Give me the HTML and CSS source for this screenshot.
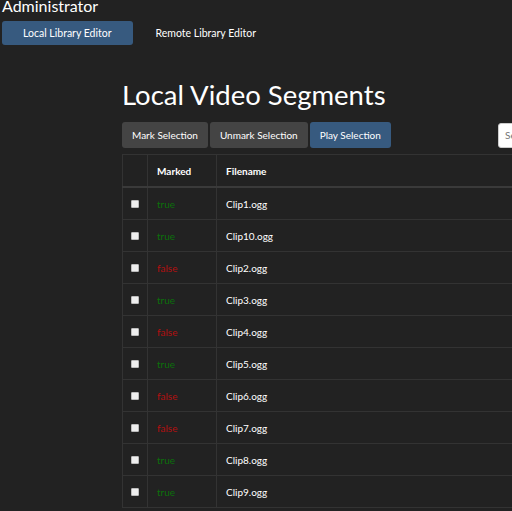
FILE: index.html
```html
<!DOCTYPE html>
<html lang="en">
<head>
  <meta charset="UTF-8">
  <title>Administrator</title>
  <link rel="stylesheet" href="styles.css">
</head>
<body>
  <div class="brand">Administrator</div>
  <ul class="nav-pills">
    <li><a class="active" href="#">Local Library Editor</a></li>
    <li><a href="#">Remote Library Editor</a></li>
  </ul>

  <div class="container">
    <h1>Local Video Segments</h1>
    <div class="toolbar">
      <div class="btn-group">
        <button class="btn">Mark Selection</button>
        <button class="btn">Unmark Selection</button>
        <button class="btn btn-primary">Play Selection</button>
      </div>
      <input class="search" type="text" placeholder="Search">
    </div>

    <table class="segments">
      <thead>
        <tr>
          <th class="col-check"></th>
          <th class="col-marked">Marked</th>
          <th>Filename</th>
        </tr>
      </thead>
      <tbody>
        <tr><td class="col-check"><input type="checkbox"></td><td class="yes">true</td><td>Clip1.ogg</td></tr>
        <tr><td class="col-check"><input type="checkbox"></td><td class="yes">true</td><td>Clip10.ogg</td></tr>
        <tr><td class="col-check"><input type="checkbox"></td><td class="no">false</td><td>Clip2.ogg</td></tr>
        <tr><td class="col-check"><input type="checkbox"></td><td class="yes">true</td><td>Clip3.ogg</td></tr>
        <tr><td class="col-check"><input type="checkbox"></td><td class="no">false</td><td>Clip4.ogg</td></tr>
        <tr><td class="col-check"><input type="checkbox"></td><td class="yes">true</td><td>Clip5.ogg</td></tr>
        <tr><td class="col-check"><input type="checkbox"></td><td class="no">false</td><td>Clip6.ogg</td></tr>
        <tr><td class="col-check"><input type="checkbox"></td><td class="no">false</td><td>Clip7.ogg</td></tr>
        <tr><td class="col-check"><input type="checkbox"></td><td class="yes">true</td><td>Clip8.ogg</td></tr>
        <tr><td class="col-check"><input type="checkbox"></td><td class="yes">true</td><td>Clip9.ogg</td></tr>
      </tbody>
    </table>
  </div>
</body>
</html>
```

FILE: styles.css
```css
body {
  font-family: Lato, "Open Sans", sans-serif;
  background: #222;
  color: #fff;
  margin: 0;
  padding: 0;
  overflow: hidden;
}

.brand {
  font-size: 16px;
  line-height: 20px;
  margin-top: -4px;
  padding-left: 2px;
}

.nav-pills {
  list-style: none;
  margin: 5px 0 0 2px;
  padding: 0;
  display: flex;
  gap: 2px;
}

.nav-pills a {
  display: block;
  height: 24px;
  line-height: 24px;
  padding: 0 21px;
  font-size: 10.5px;
  color: #fff;
  text-decoration: none;
  border-radius: 3px;
}

.nav-pills a.active {
  background: #375a7f;
}

.container {
  margin-left: 122px;
  width: 496px;
}

h1 {
  font-size: 27.5px;
  font-weight: 400;
  line-height: 34px;
  margin: 33px 0 0;
}

/* buttons + search */
.toolbar {
  display: flex;
  justify-content: space-between;
  align-items: center;
  margin-top: 10px;
  height: 26px;
}

.btn-group {
  display: flex;
  gap: 2px;
}

.btn {
  font-family: inherit;
  font-size: 10px;
  color: #fff;
  background: #444;
  border: none;
  border-radius: 3px;
  height: 26px;
  padding: 0 10px;
}

.btn-primary {
  background: #375a7f;
}

.search {
  width: 120px;
  height: 25px;
  box-sizing: border-box;
  border: 1px solid #ccc;
  border-radius: 3px;
  padding: 0 6px;
  font-family: inherit;
  font-size: 10px;
  background: #fff;
}

.segments {
  margin-top: 6px;
  width: 100%;
  border-collapse: collapse;
  border: 1px solid #333;
}

.segments th,
.segments td {
  height: 31px;
  padding: 0 9px;
  text-align: left;
  border: 1px solid #333;
  font-size: 10px;
}

.segments th {
  font-weight: 700;
  border-bottom: 2px solid #3a3a3a;
}

.segments .col-check {
  width: 8px;
  padding: 0 8px;
}

.segments .col-marked {
  width: 50px;
}

.segments td.yes {
  color: #0b700b;
}

.segments td.no {
  color: #b31010;
}

.segments input[type="checkbox"] {
  appearance: none;
  display: block;
  margin: 0;
  width: 8px;
  height: 8px;
  background: #eee;
  border: 1px solid #bbb;
  border-radius: 1px;
}
```
